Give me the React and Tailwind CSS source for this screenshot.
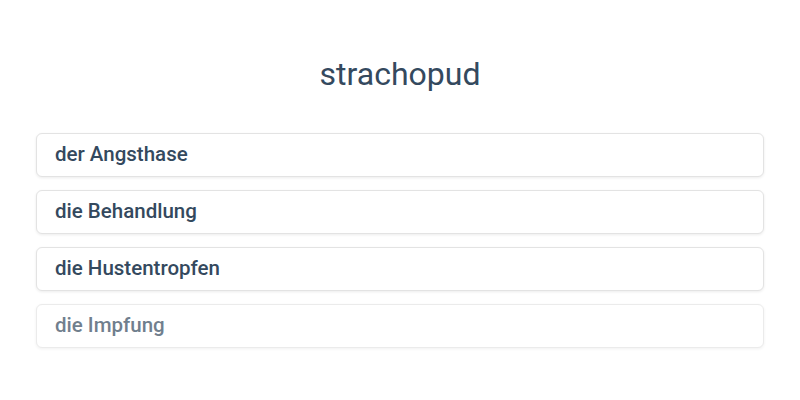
export default function App() {
  const items = ['der Angsthase', 'die Behandlung', 'die Hustentropfen', 'die Impfung']
  return (
    <div className="w-[800px] h-[400px] bg-white px-9 pt-[54px] font-['Roboto',sans-serif] text-[#34495e]">
      <h1 className="text-center text-[32px] leading-10">strachopud</h1>
      <div className="mt-[39px] flex flex-col gap-[13.5px]">
        {items.map((item, i) => (
          <div
            key={item}
            className={`h-[43.5px] flex items-center px-[18px] rounded-md border border-[#e3e3e3] bg-white shadow-[0_1px_3px_rgba(0,0,0,0.08)] text-[20.5px] font-medium ${i === 3 ? 'opacity-70' : ''}`}
          >
            {item}
          </div>
        ))}
      </div>
    </div>
  )
}
